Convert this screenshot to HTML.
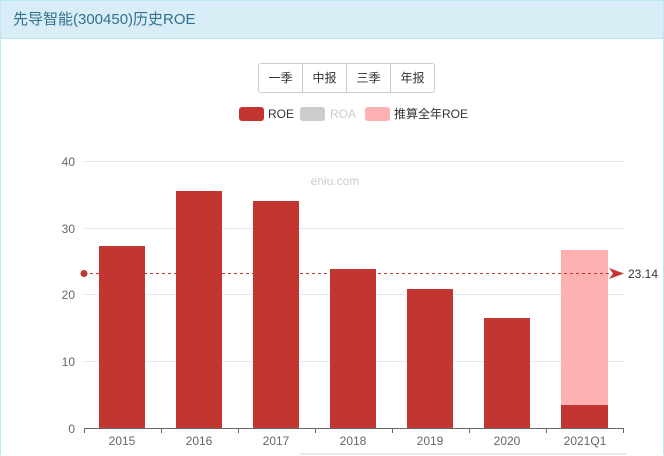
<!DOCTYPE html><html><head><meta charset="utf-8"><style>
html,body{margin:0;width:664px;height:456px;overflow:hidden;background:#fff;font-family:"Liberation Sans","Noto Sans CJK SC",sans-serif;}
.panel{position:absolute;left:0;top:0;width:662px;height:460px;border:1px solid #bce8f1;box-sizing:content-box;}
.wrap{position:absolute;left:0;top:0;width:664px;height:456px;overflow:hidden;}
.hd{height:37px;background:#d9edf7;border-bottom:1px solid #bce8f1;color:#31708f;font-size:15px;line-height:37px;padding-left:12px;}
.btns{position:absolute;left:258px;top:63px;display:flex;border:1px solid #ccc;border-radius:3px;}
.btns div{width:43px;height:28px;line-height:28px;text-align:center;font-size:12px;color:#333;border-left:1px solid #ccc;}
.btns div:first-child{border-left:none}
</style></head><body><div class="wrap">
<div class="panel" style="height:454px;border-bottom:none"><div class="hd">先导智能(300450)历史ROE</div></div>
<div class="btns"><div>一季</div><div>中报</div><div>三季</div><div>年报</div></div>
<svg width="664" height="456" style="position:absolute;left:0;top:0" font-family="Liberation Sans,Noto Sans CJK SC,sans-serif">
<rect x="239" y="107" width="25" height="14" rx="3" fill="#c23531"/><text x="268" y="118" font-size="12" fill="#333">ROE</text>
<rect x="300" y="107" width="25" height="14" rx="3" fill="#ccc"/><text x="330" y="118" font-size="12" fill="#ccc">ROA</text>
<rect x="365" y="107" width="25" height="14" rx="3" fill="#ffb0b0"/><text x="394" y="118" font-size="12" fill="#333">推算全年ROE</text>
<g stroke="#e6e9f0"><line x1="84" x2="624" y1="161.5" y2="161.5"/><line x1="84" x2="624" y1="228.5" y2="228.5"/><line x1="84" x2="624" y1="294.5" y2="294.5"/><line x1="84" x2="624" y1="361.5" y2="361.5"/></g>
<g font-size="12" fill="#666" text-anchor="end"><text x="75" y="166">40</text><text x="75" y="233">30</text><text x="75" y="299">20</text><text x="75" y="366">10</text><text x="75" y="433">0</text></g>
<text x="335" y="185" font-size="12" fill="#ccc" text-anchor="middle">eniu.com</text>
<g fill="#c23531">
<rect x="99" y="246" width="46" height="182"/><rect x="176" y="191" width="46" height="237"/><rect x="253" y="201" width="46" height="227"/><rect x="330" y="269" width="46" height="159"/><rect x="407" y="289" width="46" height="139"/><rect x="484" y="318" width="46" height="110"/></g>
<rect x="561" y="250" width="47" height="155" fill="#ffb0b0"/><rect x="561" y="405" width="47" height="23" fill="#c23531"/>
<line x1="84" x2="624" y1="428.5" y2="428.5" stroke="#666"/>
<g stroke="#666"><line x1="84.5" x2="84.5" y1="428" y2="433"/><line x1="161.5" x2="161.5" y1="428" y2="433"/><line x1="238.5" x2="238.5" y1="428" y2="433"/><line x1="315.5" x2="315.5" y1="428" y2="433"/><line x1="392.5" x2="392.5" y1="428" y2="433"/><line x1="469.5" x2="469.5" y1="428" y2="433"/><line x1="546.5" x2="546.5" y1="428" y2="433"/><line x1="623.5" x2="623.5" y1="428" y2="433"/></g>
<g font-size="12" fill="#666" text-anchor="middle"><text x="122" y="445">2015</text><text x="199" y="445">2016</text><text x="276" y="445">2017</text><text x="353" y="445">2018</text><text x="430" y="445">2019</text><text x="507" y="445">2020</text><text x="585" y="445">2021Q1</text></g>
<line x1="84" x2="612" y1="273.5" y2="273.5" stroke="#c23531" stroke-dasharray="3,3"/>
<circle cx="84" cy="273.5" r="3.5" fill="#c23531"/>
<path d="M609 268 L624 273.5 L609 279 L613 273.5Z" fill="#c23531"/>
<text x="628" y="278" font-size="12" fill="#333">23.14</text>
<line x1="300" x2="626" y1="454" y2="454" stroke="#e6e9f0" stroke-width="2"/>
</svg>
</div></body></html>
